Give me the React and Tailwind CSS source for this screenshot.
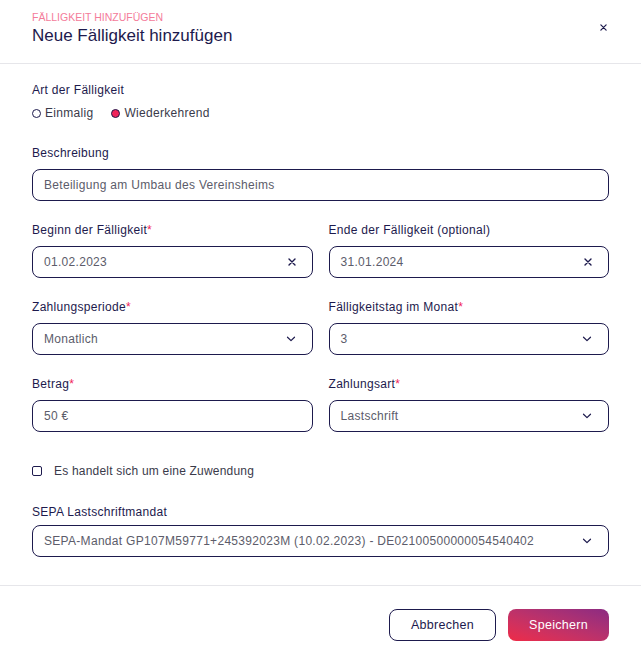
import React from 'react';

const navy = 'text-[#1d1a4d]';

function Label({ children, required, tight }) {
  return (
    <label className={`block text-[12px] tracking-[0.3px] font-medium text-[#1d1a4d] leading-[14px] ${tight ? 'mb-[6px]' : 'mb-[9px]'}`}>
      {children}
      {required && <span className="text-[#f0245a]">*</span>}
    </label>
  );
}

function Chevron() {
  return (
    <svg width="10" height="6" viewBox="0 0 10 6" fill="none">
      <path d="M1.5 1.2L5 4.6l3.5-3.4" stroke="#1d1a4d" strokeWidth="1.2" strokeLinecap="round" strokeLinejoin="round" />
    </svg>
  );
}

function Cross({ size = 8 }) {
  return (
    <svg width={size} height={size} viewBox="0 0 8 8" fill="none">
      <path d="M1 1l6 6M7 1L1 7" stroke="#1d1a4d" strokeWidth="1.4" strokeLinecap="round" />
    </svg>
  );
}

function Field({ value, icon }) {
  return (
    <div className="h-[32px] border border-[#1d1a4d] rounded-[8px] flex items-center justify-between pl-[11px] pr-[16px]">
      <span className="text-[12px] tracking-[0.3px] text-[#5c5c6a]">{value}</span>
      {icon === 'chevron' && <Chevron />}
      {icon === 'cross' && <Cross />}
    </div>
  );
}

export default function App() {
  return (
    <div className="w-[641px] h-[657px] bg-white" style={{ fontFamily: '"Liberation Sans", Arial, sans-serif' }}>
      {/* Header */}
      <div className="h-[64px] border-b border-[#e6e6ea] px-[32px] flex items-start justify-between">
        <div className="pt-[11px]">
          <div className="text-[10.5px] text-[#f47b9a] uppercase leading-[13px]">Fälligkeit hinzufügen</div>
          <div className={`text-[17px] font-medium ${navy} leading-[22px] mt-[1px]`}>Neue Fälligkeit hinzufügen</div>
        </div>
        <div className="pt-[24px] pr-[2px]">
          <Cross size={7} />
        </div>
      </div>

      {/* Body */}
      <div className="px-[32px] pt-[19px] pb-[28px] border-b border-[#e6e6ea]">
        <Label>Art der Fälligkeit</Label>
        <div className="flex items-center gap-[18px] text-[12px] tracking-[0.3px] text-[#3a3a4a] -mt-[2px]">
          <div className="flex items-center gap-[4px]">
            <span className="w-[9px] h-[9px] rounded-full border border-[#1d1a4d]" />
            Einmalig
          </div>
          <div className="flex items-center gap-[4px]">
            <span className="w-[9px] h-[9px] rounded-full border border-[#1d1a4d] bg-[#f0245a]" />
            Wiederkehrend
          </div>
        </div>

        <div className="mt-[24px]">
          <Label>Beschreibung</Label>
          <Field value="Beteiligung am Umbau des Vereinsheims" />
        </div>

        <div className="grid grid-cols-2 gap-x-[16px] gap-y-[22px] mt-[22px]">
          <div>
            <Label required>Beginn der Fälligkeit</Label>
            <Field value="01.02.2023" icon="cross" />
          </div>
          <div>
            <Label>Ende der Fälligkeit (optional)</Label>
            <Field value="31.01.2024" icon="cross" />
          </div>
          <div>
            <Label required>Zahlungsperiode</Label>
            <Field value="Monatlich" icon="chevron" />
          </div>
          <div>
            <Label required>Fälligkeitstag im Monat</Label>
            <Field value="3" icon="chevron" />
          </div>
          <div>
            <Label required>Betrag</Label>
            <Field value="50 €" />
          </div>
          <div>
            <Label required>Zahlungsart</Label>
            <Field value="Lastschrift" icon="chevron" />
          </div>
        </div>

        <div className="flex items-center gap-[12px] mt-[30px] text-[12px] tracking-[0.2px] text-[#3a3a4a]">
          <span className="w-[10px] h-[10px] rounded-[2px] border border-[#1d1a4d]" />
          Es handelt sich um eine Zuwendung
        </div>

        <div className="mt-[25px]">
          <Label tight>SEPA Lastschriftmandat</Label>
          <Field value="SEPA-Mandat GP107M59771+245392023M (10.02.2023) - DE02100500000054540402" icon="chevron" />
        </div>
      </div>

      {/* Footer */}
      <div className="px-[32px] pt-[23px] flex justify-end gap-[12px]">
        <button className="w-[107px] h-[32px] rounded-[8px] border border-[#1d1a4d] text-[12.5px] tracking-[0.3px] text-[#1d1a4d] bg-white">
          Abbrechen
        </button>
        <button className="w-[101px] h-[32px] rounded-[8px] text-[12.5px] tracking-[0.3px] text-white bg-gradient-to-tr from-[#ef2a46] to-[#8c2a82]">
          Speichern
        </button>
      </div>
    </div>
  );
}
